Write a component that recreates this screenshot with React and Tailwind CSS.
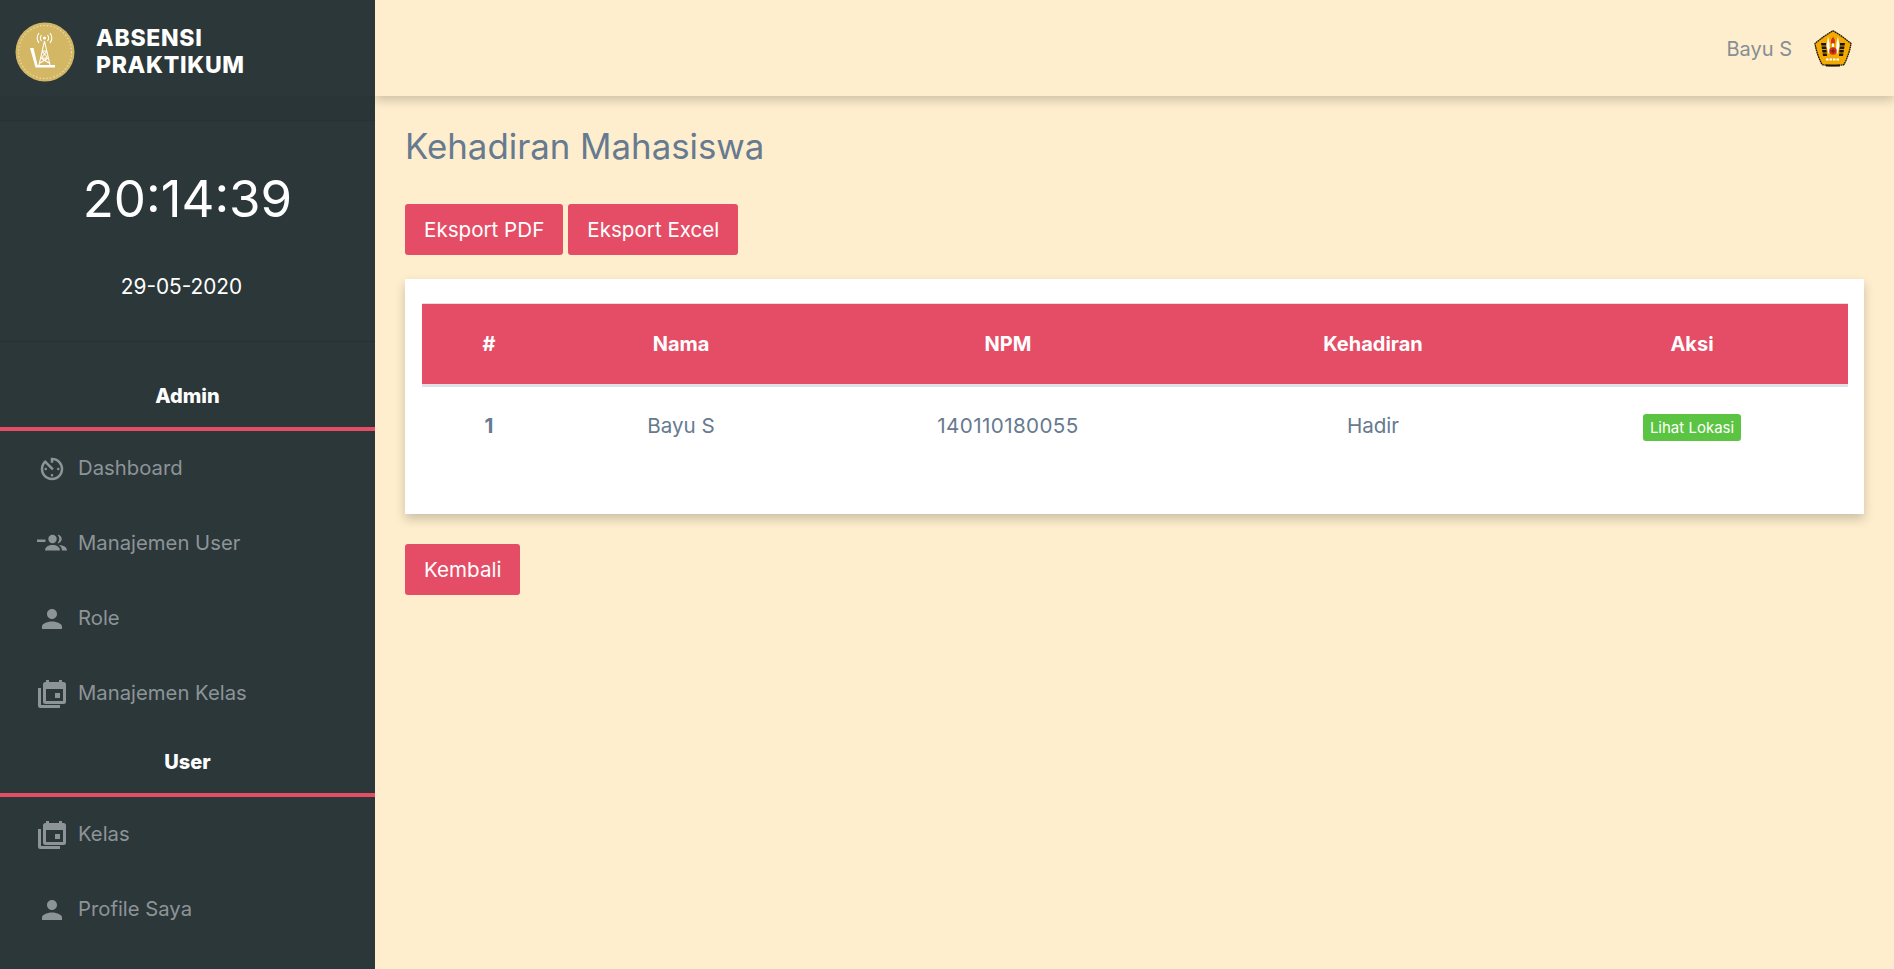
import { MdAvTimer, MdPerson } from "react-icons/md";

function CalendarStack({ className }) {
  return (
    <svg viewBox="0 0 30 30" className={className} fill="currentColor">
      <path d="M1 9h3v17h19v3H3.500A2.500 2.500 0 0 1 1 26.500z" />
      <path fillRule="evenodd" d="M9 1h3v2h10V1h3v2h1.500A2.500 2.500 0 0 1 29 5.500v17a2.500 2.500 0 0 1-2.500 2.500h-18A2.500 2.500 0 0 1 6 22.500v-17A2.500 2.500 0 0 1 8.500 3H9zM9 10v12h17V10z" />
      <rect x="18" y="14" width="5" height="5" />
    </svg>
  );
}

function GroupIcon({ className }) {
  return (
    <svg viewBox="0 0 30 30" className={className} fill="currentColor">
      <rect x="0" y="10.500" width="8.500" height="2.500" />
      <circle cx="15.500" cy="10" r="4.200" />
      <path d="M8 21.500c0-3.700 3.800-5.500 7.500-5.500s7.500 1.800 7.500 5.500z" />
      <path d="M20.500 5.800a4.200 4.200 0 0 1 0 8.400 6.500 6.500 0 0 0 0-8.400z" />
      <path d="M22 16c4.500.3 8 2 8 5.500h-5c0-2.200-1.100-4-3-5.500z" />
    </svg>
  );
}

function TowerLogo() {
  return (
    <svg viewBox="0 0 60 60" className="w-[60px] h-[60px] shrink-0">
      <circle cx="30" cy="30" r="29.500" fill="#d4b765" />
      <circle cx="30" cy="30" r="26.500" fill="none" stroke="#f3ead0" strokeWidth="1.200" strokeDasharray="1.500 2" opacity="0.7" />
      <g stroke="#fff" fill="none" strokeWidth="1.100">
        <path d="M24 43 29.500 19 35 43M26 36h7M27.500 29h4M25 41l8-5M34 41l-8-5M27 35l5-6M32 35l-5-6" />
        <path d="M26.500 19a5 5 0 0 1 0-6M32.500 19a5 5 0 0 0 0-6M24 21a8.500 8.500 0 0 1 0-10M35 21a8.500 8.500 0 0 0 0-10" />
        <circle cx="29.500" cy="16" r="1" fill="#fff" />
      </g>
      <path d="M15 26h3.500l4 17H40v2.500H20.500z" fill="#fff" />
    </svg>
  );
}

function CrestLogo() {
  return (
    <svg viewBox="0 0 38 37" className="w-[38px] h-[37px]">
      <path d="M19 .8C25 4 31 8.500 37 13.500 36 20 33.500 28 30 34.500 23 36 15 36 8 34.500 4.500 28 2 20 1 13.500 7 8.500 13 4 19 .8z" fill="#f2a900" stroke="#1c1408" strokeWidth="1.300" strokeDasharray="1.800 .5" />
      <path d="M12 34.500h14v2H12z" fill="#1c1408" />
      <path d="M7 13h5l1 13H9zM31 13h-5l-1 13h4z" fill="#1c1408" />
      <path d="M7 16h5M7.500 19.500h5M8 23h5M26 16h5M25.500 19.500h5M25 23h5" stroke="#f2a900" strokeWidth=".9" />
      <path d="M14 6.500 12.500 16l2 8 1.500-2-.5-9zM24 6.500 25.500 16l-2 8-1.500-2 .5-9z" fill="#fff" />
      <path d="M19 7c1.300 1.400 2 2.500 2 4v2.500h-4V11c0-1.500.7-2.600 2-4z" fill="#d93218" />
      <rect x="18" y="13.500" width="2" height="3.500" fill="#fff" />
      <circle cx="19" cy="21" r="3.800" fill="#d93218" />
      <path d="M16.500 21h5M19 18.500v5" stroke="#1c1408" strokeWidth=".5" />
      <path d="M12 29.500h14" stroke="#fff" strokeWidth="2" strokeDasharray="2.500 1" />
    </svg>
  );
}

const adminItems = [
  { icon: MdAvTimer, label: "Dashboard" },
  { icon: GroupIcon, label: "Manajemen User" },
  { icon: MdPerson, label: "Role" },
  { icon: CalendarStack, label: "Manajemen Kelas" },
];

const userItems = [
  { icon: CalendarStack, label: "Kelas" },
  { icon: MdPerson, label: "Profile Saya" },
];

function NavItem({ icon: Icon, label }) {
  return (
    <div className="h-[75px] flex items-center text-[#8d9498] text-[20.3px]">
      <div className="w-[78px] pl-[37px] shrink-0">
        <Icon className="w-[30px] h-[30px]" />
      </div>
      {label}
    </div>
  );
}

function Section({ title }) {
  return (
    <div className="h-[66px] flex items-center justify-center border-b-4 border-[#e54d66] text-white font-extrabold text-[20px]">
      {title}
    </div>
  );
}

function Button({ children }) {
  return (
    <button className="h-[51px] px-[19px] pt-[1px] bg-[#e54d66] text-white text-[20.6px] rounded-[3px]">
      {children}
    </button>
  );
}

export default function App() {
  return (
    <div className="flex h-[969px] overflow-hidden bg-[#feeecd] font-['Inter','Liberation_Sans',sans-serif]">
      {/* Sidebar */}
      <aside className="relative z-10 w-[375px] shrink-0 bg-[#2c373a] flex flex-col">
        <div className="h-[96px] flex items-center gap-[21px] pl-[15px] pt-[8px]">
          <TowerLogo />
          <div className="text-white font-extrabold text-[23px] leading-[27px] tracking-[0.7px]">
            ABSENSI
            <br />
            PRAKTIKUM
          </div>
        </div>
        <div className="h-[24px] bg-[#2a3537]" />
        <div className="h-[222px] border-y border-[#283234] text-white text-center">
          <div className="mt-[46px] text-[51px] leading-[64px]">20:14:39</div>
          <div className="mt-[44px] text-[20.8px] leading-[24px] pr-[12px]">29-05-2020</div>
        </div>
        <div className="mt-[23px]">
          <Section title="Admin" />
        </div>
        {adminItems.map((item) => (
          <NavItem key={item.label} {...item} />
        ))}
        <Section title="User" />
        {userItems.map((item) => (
          <NavItem key={item.label} {...item} />
        ))}
      </aside>

      {/* Main */}
      <main className="flex-1 min-w-0">
        <header className="h-[96px] flex items-center justify-end pr-[42px] shadow-[0_4px_10px_rgba(0,0,0,0.2)]">
          <span className="text-[#868e96] text-[20px] mr-[22px] pt-[1px]">Bayu S</span>
          <CrestLogo />
        </header>
        <div className="px-[30px]">
          <h1 className="mt-[28px] h-[46px] text-[#667a90] text-[34.8px] leading-[44px]">Kehadiran Mahasiswa</h1>
          <div className="mt-[34px] flex gap-[5px]">
            <Button>Eksport PDF</Button>
            <Button>Eksport Excel</Button>
          </div>
          <div className="mt-[24px] h-[235px] bg-white pt-[24px] px-[17px] shadow-[0_5px_10px_rgba(0,0,0,0.2)]">
            <table className="w-[1426px] table-fixed text-center text-[20px]">
              <thead>
                <tr className="h-[82px] bg-[#e54d66] text-white font-bold border-t border-[#dee2e6] border-b-[3px]">
                  <th className="w-[134px]">#</th>
                  <th className="w-[250px]">Nama</th>
                  <th className="w-[404px]">NPM</th>
                  <th className="w-[326px]">Kehadiran</th>
                  <th className="w-[312px]">Aksi</th>
                </tr>
              </thead>
              <tbody className="text-[#667a90] text-[20.6px]">
                <tr className="h-[81px]">
                  <td className="font-bold">1</td>
                  <td>Bayu S</td>
                  <td className="tracking-[0.4px]">140110180055</td>
                  <td>Hadir</td>
                  <td>
                    <span className="inline-block h-[27px] leading-[27px] px-[7px] bg-[#5cc443] text-white text-[15px] rounded-[3px]">
                      Lihat Lokasi
                    </span>
                  </td>
                </tr>
              </tbody>
            </table>
          </div>
          <div className="mt-[30px]">
            <Button>Kembali</Button>
          </div>
        </div>
      </main>
    </div>
  );
}
